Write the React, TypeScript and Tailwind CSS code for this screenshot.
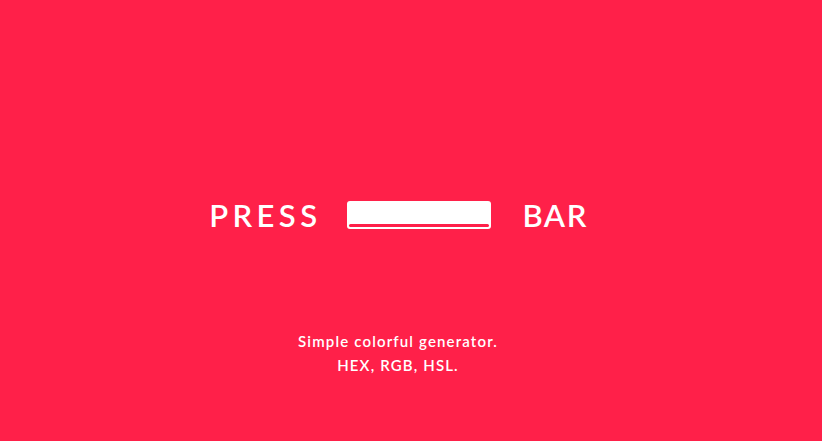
export default function App() {
  const font = { fontFamily: "Lato, 'Open Sans', sans-serif" };
  return (
    <div
      className="flex h-[441px] w-full flex-col items-center overflow-hidden bg-[#ff2049] text-white"
      style={font}
    >
      <div className="mt-[197px] flex h-[36px] items-center pr-[25px]">
        <span className="text-[31px] font-semibold leading-none tracking-[4.4px]">PRESS</span>
        <div className="ml-[26px] mr-[31px] flex h-[28px] w-[144px] flex-col justify-end rounded-[3px] bg-white px-[2px] pb-[2px]">
          <div className="h-[3px] rounded-full bg-[#ff2049]" />
        </div>
        <span className="text-[31px] font-semibold leading-none tracking-[1.5px]">BAR</span>
      </div>
      <div className="mt-[96px] flex flex-col items-center pr-[26px] text-[15px] font-semibold leading-[24px] tracking-[1.15px]">
        <p>Simple colorful generator.</p>
        <p>HEX, RGB, HSL.</p>
      </div>
    </div>
  );
}
